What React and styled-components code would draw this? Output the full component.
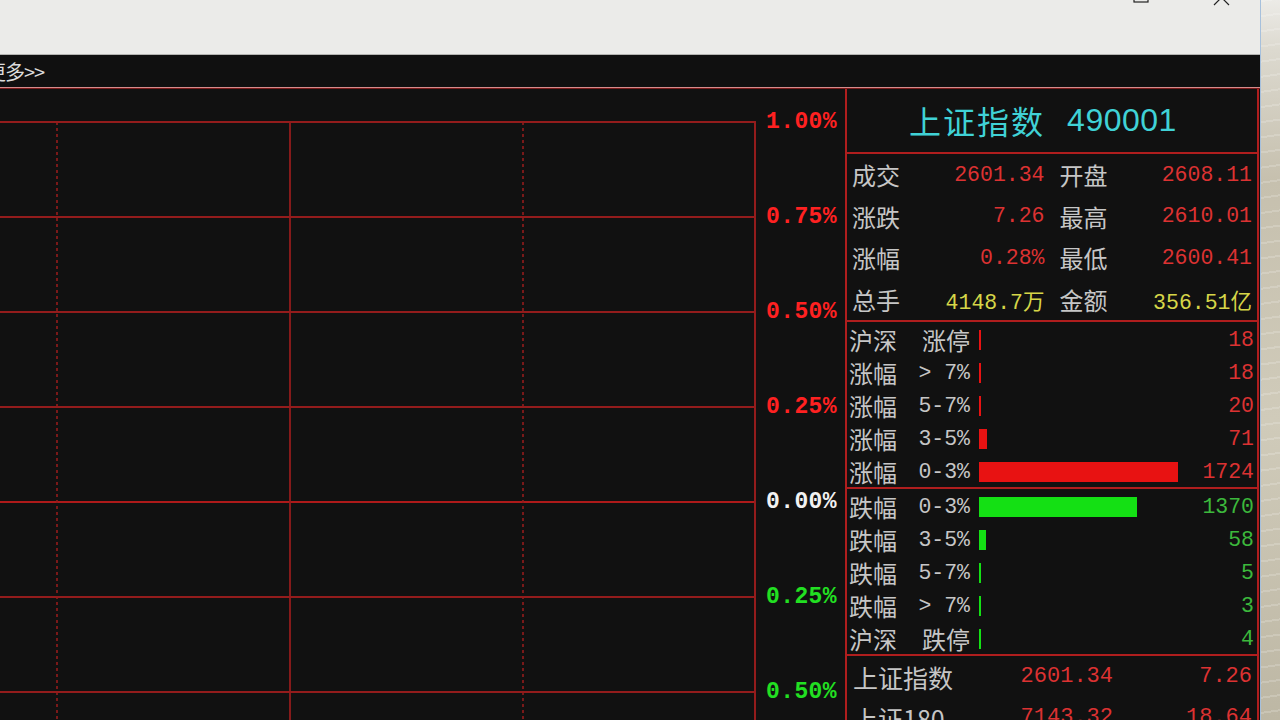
import React from "react";
import styled, { createGlobalStyle } from "styled-components";

const CJK = `"Noto Sans CJK SC", "Noto Sans", sans-serif`;
const MONO = `"Liberation Mono", "Noto Sans CJK SC", monospace`;

const GRID_RED = "#941c1c";
const PANEL_RED = "#b01e1e";

const GlobalStyle = createGlobalStyle`
  html, body {
    margin: 0;
    padding: 0;
    background: #111;
    overflow: hidden;
  }
  #root {
    width: 1280px;
    height: 720px;
  }
`;

const Screen = styled.div`
  display: flex;
  width: 1280px;
  height: 720px;
  overflow: hidden;
`;

const Window = styled.div`
  width: 1260px;
  flex-shrink: 0;
  display: flex;
  flex-direction: column;
  background: #111;
`;

const Desktop = styled.div`
  flex: 1;
  border-left: 1px solid #a6c0dc;
  background:
    repeating-linear-gradient(172deg, rgba(255, 255, 255, 0.18) 0 2px, transparent 2px 15px),
    linear-gradient(180deg, #ecebe7 0, #dcd9cf 50px, #c6c0ae 180px, #d0cbba 420px, #bdb7a4 720px);
`;

const TitleBar = styled.div`
  height: 55px;
  box-sizing: border-box;
  background: #ebebe9;
  border-bottom: 1px solid #b4b4b2;
  display: flex;
  justify-content: flex-end;
  align-items: flex-start;
  gap: 63px;
  padding-right: 30px;
`;

const WinButton = styled.svg`
  width: 17px;
  height: 17px;
  margin-top: ${(p) => p.$lift}px;
  stroke: #222;
  stroke-width: 1.2;
  fill: none;
`;

const TabBar = styled.div`
  height: 32px;
  background: #101010;
  border-bottom: 1px solid #d48c8c;
  box-shadow: 0 1px 0 #7a1a1a;
  display: flex;
  align-items: center;
  position: relative;
  z-index: 1;
`;

const MoreLink = styled.span`
  margin-left: -14px;
  font-family: ${CJK};
  font-size: 20px;
  color: #dcdcdc;
  letter-spacing: -1px;
`;

const Body = styled.div`
  flex: 1;
  display: flex;
  min-height: 0;
  overflow: hidden;
  background: #111;
`;

const Chart = styled.div`
  width: 845px;
  flex-shrink: 0;
  display: flex;
`;

const Plot = styled.svg`
  width: 757px;
  height: 632px;
  flex-shrink: 0;
  display: block;
`;

const Axis = styled.div`
  flex: 1;
  display: flex;
  flex-direction: column;
  padding: 22px 0 0 9px;
`;

const AxisLabel = styled.div`
  height: 95px;
  flex-shrink: 0;
  line-height: 24px;
  font-family: ${MONO};
  font-weight: bold;
  font-size: 23px;
  letter-spacing: 0.4px;
  color: ${(p) => p.$color};
`;

const Panel = styled.div`
  flex: 1;
  display: flex;
  flex-direction: column;
  border-left: 2px solid ${PANEL_RED};
  border-right: 2px solid ${PANEL_RED};
  margin-right: 1px;
  min-width: 0;
`;

const Header = styled.div`
  height: 64px;
  flex-shrink: 0;
  border-bottom: 2px solid ${PANEL_RED};
  display: flex;
  align-items: center;
  justify-content: center;
  gap: 22px;
  padding-right: 18px;
  color: #40d2d6;
`;

const HeaderName = styled.span`
  font-family: ${CJK};
  font-size: 32px;
  letter-spacing: 2px;
`;

const HeaderCode = styled.span`
  font-family: "Liberation Sans", sans-serif;
  font-size: 32px;
  letter-spacing: 0.5px;
`;

const QuoteGrid = styled.div`
  flex-shrink: 0;
  display: grid;
  grid-template-columns: 1fr 1fr;
  grid-auto-rows: 41.5px;
  column-gap: 15px;
  padding: 0 5px;
  border-bottom: 2px solid ${PANEL_RED};
`;

const Pair = styled.div`
  display: flex;
  align-items: center;
  justify-content: space-between;
`;

const Label = styled.span`
  font-family: ${CJK};
  font-size: ${(p) => p.$size || 24}px;
  color: #c6c6c6;
  white-space: nowrap;
`;

const Value = styled.span`
  font-family: ${MONO};
  font-size: ${(p) => p.$size || 21.5}px;
  color: ${(p) => p.$color};
  white-space: nowrap;
`;

const DistGroup = styled.div`
  flex-shrink: 0;
  border-bottom: 2px solid ${PANEL_RED};
`;

const DistRow = styled.div`
  height: 33px;
  display: grid;
  grid-template-columns: 68px 53px 1fr 70px;
  align-items: center;
  padding: 0 3px 0 2px;
`;

const Range = styled.span`
  text-align: right;
  white-space: pre;
  font-family: ${(p) => (p.$cjk ? CJK : MONO)};
  font-size: ${(p) => (p.$cjk ? 24 : 21.5)}px;
  color: #c6c6c6;
`;

const BarCell = styled.div`
  display: flex;
  align-items: center;
  padding-left: 9px;
`;

const Bar = styled.div`
  height: 20px;
  background: ${(p) => p.$color};
`;

const Count = styled.span`
  text-align: right;
  font-family: ${MONO};
  font-size: 21.5px;
  color: ${(p) => p.$color};
`;

const IndexRow = styled.div`
  height: 41px;
  flex-shrink: 0;
  display: grid;
  grid-template-columns: 130px 130px 1fr;
  align-items: center;
  padding: 0 5px 0 6px;
  & > :not(:first-child) {
    text-align: right;
  }
`;

const COLORS = {
  red: "#dc3232",
  yellow: "#d6d648",
  green: "#3cb83c",
  barRed: "#e81212",
  barGreen: "#14e014",
};

const axis = [
  { text: "1.00%", color: "#ff2121" },
  { text: "0.75%", color: "#ff2121" },
  { text: "0.50%", color: "#ff2121" },
  { text: "0.25%", color: "#ff2121" },
  { text: "0.00%", color: "#f2f2f2" },
  { text: "0.25%", color: "#22e022" },
  { text: "0.50%", color: "#22e022" },
];

const quotes = [
  [["成交", "2601.34"], ["开盘", "2608.11"], "red"],
  [["涨跌", "7.26"], ["最高", "2610.01"], "red"],
  [["涨幅", "0.28%"], ["最低", "2600.41"], "red"],
  [["总手", "4148.7万"], ["金额", "356.51亿"], "yellow"],
];

const upRows = [
  { kind: "沪深", range: "涨停", n: 18 },
  { kind: "涨幅", range: "> 7%", n: 18 },
  { kind: "涨幅", range: "5-7%", n: 20 },
  { kind: "涨幅", range: "3-5%", n: 71 },
  { kind: "涨幅", range: "0-3%", n: 1724 },
];

const downRows = [
  { kind: "跌幅", range: "0-3%", n: 1370 },
  { kind: "跌幅", range: "3-5%", n: 58 },
  { kind: "跌幅", range: "5-7%", n: 5 },
  { kind: "跌幅", range: "> 7%", n: 3 },
  { kind: "沪深", range: "跌停", n: 4 },
];

const indices = [
  { name: "上证指数", price: "2601.34", change: "7.26" },
  { name: "上证180", price: "7143.32", change: "18.64" },
];

const MAX_COUNT = 1724;
const MAX_BAR = 199;

const GridLines = () => {
  const rows = [0, 1, 2, 3, 4, 5, 6].map((i) => 34 + i * 95);
  return (
    <Plot viewBox="0 0 757 632">
      {rows.map((y, i) => (
        <line
          key={y}
          x1="0"
          x2="756"
          y1={y}
          y2={y}
          stroke={i === 4 ? "#ae1a1a" : GRID_RED}
          strokeWidth="2"
        />
      ))}
      <line x1="57" x2="57" y1="34" y2="632" stroke={GRID_RED} strokeWidth="1.6" strokeDasharray="3 3" />
      <line x1="290" x2="290" y1="34" y2="632" stroke={GRID_RED} strokeWidth="1.8" />
      <line x1="523" x2="523" y1="34" y2="632" stroke={GRID_RED} strokeWidth="1.6" strokeDasharray="3 3" />
      <line x1="755" x2="755" y1="34" y2="632" stroke={GRID_RED} strokeWidth="2" />
    </Plot>
  );
};

const DistributionRow = ({ row, up }) => {
  const width = Math.max(2, (row.n / MAX_COUNT) * MAX_BAR);
  const cjkRange = /[\u4e00-\u9fff]/.test(row.range);
  return (
    <DistRow>
      <Label>{row.kind}</Label>
      <Range $cjk={cjkRange}>{row.range}</Range>
      <BarCell>
        <Bar $color={up ? COLORS.barRed : COLORS.barGreen} style={{ width }} />
      </BarCell>
      <Count $color={up ? COLORS.red : COLORS.green}>{row.n}</Count>
    </DistRow>
  );
};

const App = () => {
  return (
    <Screen>
      <GlobalStyle />
      <Window>
        <TitleBar>
          <WinButton $lift={-13} viewBox="0 0 17 17">
            <rect x="1" y="1" width="14" height="14" />
          </WinButton>
          <WinButton $lift={-11} viewBox="0 0 17 17">
            <path d="M1 1 L16 16 M16 1 L1 16" />
          </WinButton>
        </TitleBar>
        <TabBar>
          <MoreLink>更多&gt;&gt;</MoreLink>
        </TabBar>
        <Body>
          <Chart>
            <GridLines />
            <Axis>
              {axis.map((a, i) => (
                <AxisLabel key={i} $color={a.color}>
                  {a.text}
                </AxisLabel>
              ))}
            </Axis>
          </Chart>
          <Panel>
            <Header>
              <HeaderName>上证指数</HeaderName>
              <HeaderCode>490001</HeaderCode>
            </Header>
            <QuoteGrid>
              {quotes.map(([left, right, tone]) => (
                <React.Fragment key={left[0]}>
                  <Pair>
                    <Label>{left[0]}</Label>
                    <Value $color={COLORS[tone]}>{left[1]}</Value>
                  </Pair>
                  <Pair>
                    <Label>{right[0]}</Label>
                    <Value $color={COLORS[tone]}>{right[1]}</Value>
                  </Pair>
                </React.Fragment>
              ))}
            </QuoteGrid>
            <DistGroup>
              {upRows.map((r, i) => (
                <DistributionRow key={i} row={r} up />
              ))}
            </DistGroup>
            <DistGroup>
              {downRows.map((r, i) => (
                <DistributionRow key={i} row={r} />
              ))}
            </DistGroup>
            {indices.map((idx) => (
              <IndexRow key={idx.name}>
                <Label $size={25}>{idx.name}</Label>
                <Value $size={22} $color={COLORS.red}>
                  {idx.price}
                </Value>
                <Value $size={22} $color={COLORS.red}>
                  {idx.change}
                </Value>
              </IndexRow>
            ))}
          </Panel>
        </Body>
      </Window>
      <Desktop />
    </Screen>
  );
};

export default App;
